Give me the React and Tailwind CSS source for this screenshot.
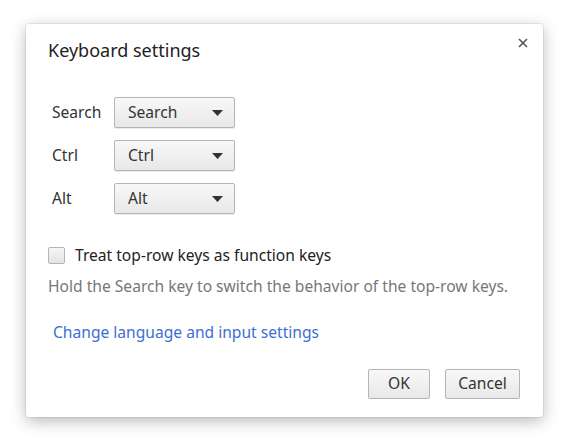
import React from 'react';

const keys = [
  { label: 'Search', value: 'Search' },
  { label: 'Ctrl', value: 'Ctrl' },
  { label: 'Alt', value: 'Alt' },
];

function Select({ value }) {
  return (
    <div className="flex h-[31px] w-[121px] items-center justify-between rounded-[2px] border border-[#b5b5b5] bg-gradient-to-b from-[#f8f8f8] to-[#e8e8e8] pl-[13px] pr-[11px] text-[15.6px] text-[#333] shadow-[0_1px_0_rgba(0,0,0,0.08)]">
      <span>{value}</span>
      <svg width="11" height="6" viewBox="0 0 11 6">
        <path d="M0 0h11L5.5 6z" fill="#333" />
      </svg>
    </div>
  );
}

export default function App() {
  return (
    <div className="h-[441px] w-[564px] bg-white pl-[26px] pt-[24px]" style={{ fontFamily: '"Noto Sans", "Open Sans", sans-serif' }}>
      <div className="relative flex h-[393px] w-[517px] flex-col rounded-[3px] bg-white pl-[22px] pt-[12px] shadow-[0_4px_16px_rgba(0,0,0,0.28),0_0_0_1px_rgba(0,0,0,0.06)]">
        <button className="absolute right-[13px] top-[12px] p-[2px] text-[#555]">
          <svg width="10" height="10" viewBox="0 0 10 10">
            <path d="M1 1l8 8M9 1l-8 8" stroke="#555" strokeWidth="1.6" />
          </svg>
        </button>

        <h1 className="text-[18px] leading-[28px] text-[#222]">Keyboard settings</h1>

        <div className="mt-[33px] flex flex-col gap-[12px] pl-[4px]">
          {keys.map((k) => (
            <div key={k.label} className="flex items-center">
              <span className="w-[62px] text-[15.6px] text-[#333]">{k.label}</span>
              <Select value={k.value} />
            </div>
          ))}
        </div>

        <label className="mt-[30px] flex items-center">
          <span className="h-[17px] w-[17px] rounded-[2px] border border-[#b5b5b5] bg-gradient-to-b from-[#f5f5f5] to-[#e4e4e4]" />
          <span className="ml-[10px] text-[15.6px] leading-[22px] text-[#222]">Treat top-row keys as function keys</span>
        </label>

        <p className="mt-[9px] text-[15.6px] leading-[22px] text-[#777]">Hold the Search key to switch the behavior of the top-row keys.</p>

        <a className="ml-[5px] mt-[24px] text-[15.6px] leading-[22px] text-[#3b6fd4]">Change language and input settings</a>

        <div className="mt-auto mb-[18px] mr-[23px] flex justify-end gap-[15px]">
          <button className="h-[30px] w-[62px] rounded-[2px] border border-[#b5b5b5] bg-gradient-to-b from-[#f8f8f8] to-[#e8e8e8] text-[15.6px] text-[#333]">OK</button>
          <button className="h-[30px] w-[75px] rounded-[2px] border border-[#b5b5b5] bg-gradient-to-b from-[#f8f8f8] to-[#e8e8e8] text-[15.6px] text-[#333]">Cancel</button>
        </div>
      </div>
    </div>
  );
}
